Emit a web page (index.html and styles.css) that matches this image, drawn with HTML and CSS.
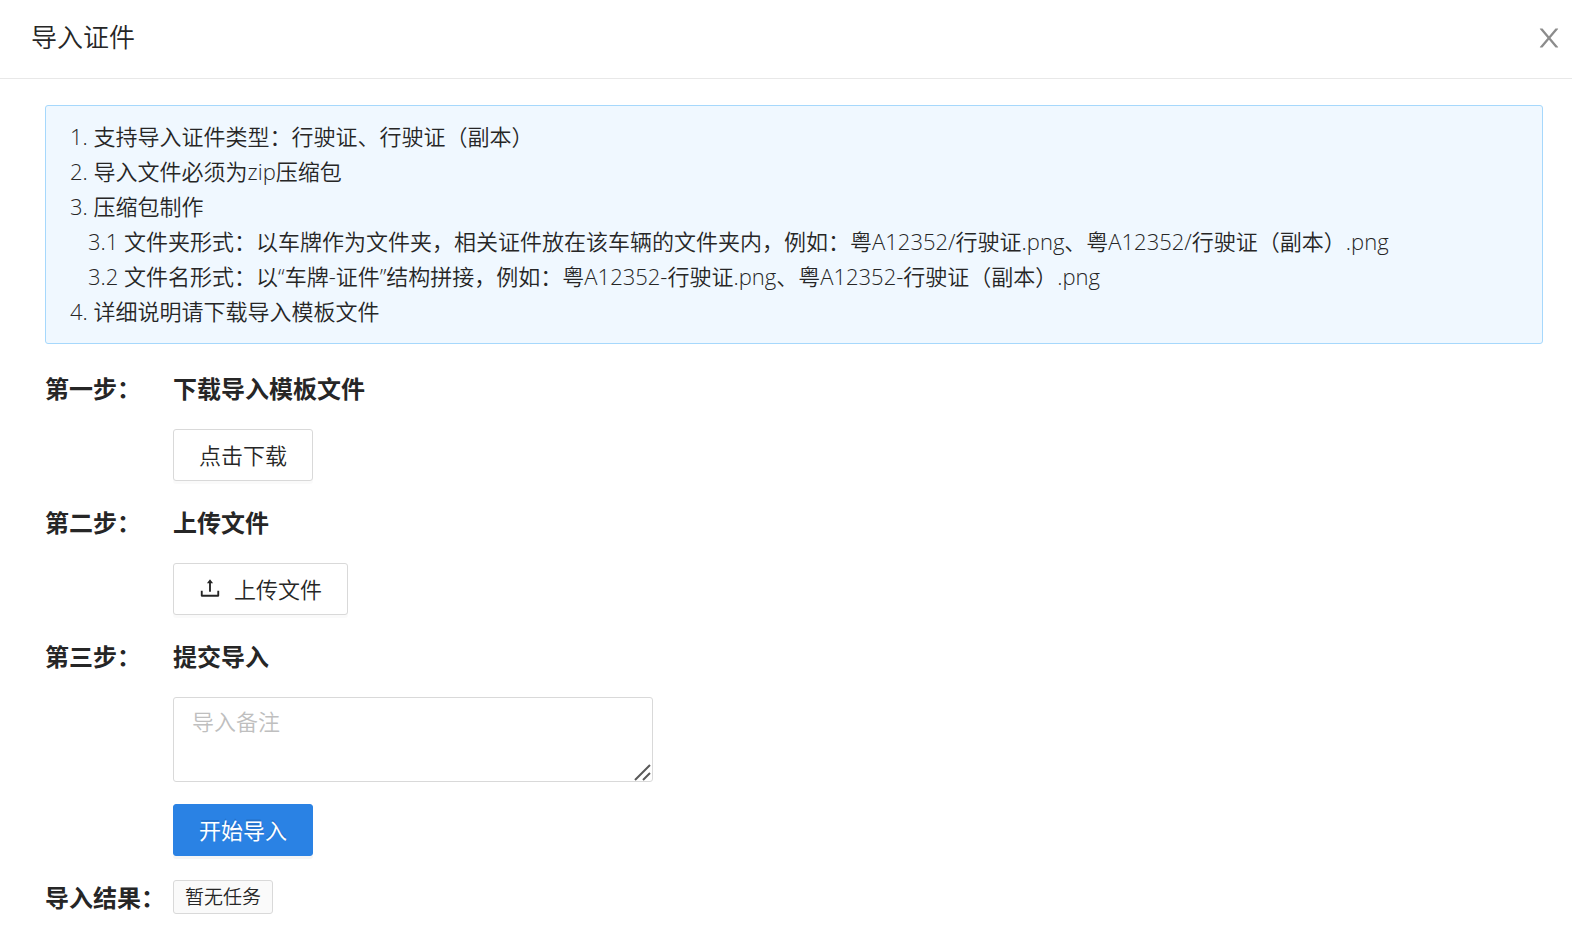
FILE: index.html
```html
<!DOCTYPE html>
<html lang="zh-CN">
<head>
    <meta charset="UTF-8">
    <meta name="viewport" content="width=device-width, initial-scale=1.0">
    <title>导入证件</title>
    <link rel="stylesheet" href="styles.css">
</head>
<body>
    <header class="header">
        <h1 class="title">导入证件</h1>
        <button class="close" type="button" aria-label="关闭">
            <svg viewBox="64 64 896 896" aria-hidden="true"><path d="M563.8 512l262.5-312.9c4.4-5.2.7-13.1-6.1-13.1h-79.8c-4.7 0-9.2 2.1-12.3 5.7L511.6 449.8 295.1 191.7c-3-3.6-7.5-5.7-12.3-5.7H203c-6.8 0-10.5 7.9-6.1 13.1L459.4 512 196.9 824.9A7.95 7.95 0 0 0 203 838h79.8c4.7 0 9.2-2.1 12.3-5.7l216.5-258.1 216.5 258.1c3 3.6 7.5 5.7 12.3 5.7h79.8c6.8 0 10.5-7.9 6.1-13.1L563.8 512z"/></svg>
        </button>
    </header>

    <main class="content">
        <!-- 导入说明 -->
        <div class="notice">
            <p>1. 支持导入证件类型：行驶证、行驶证（副本）</p>
            <p>2. 导入文件必须为zip压缩包</p>
            <p>3. 压缩包制作</p>
            <p class="sub">3.1 文件夹形式：以车牌作为文件夹，相关证件放在该车辆的文件夹内，例如：粤A12352/行驶证.png、粤A12352/行驶证（副本）.png</p>
            <p class="sub">3.2 文件名形式：以“车牌-证件”结构拼接，例如：粤A12352-行驶证.png、粤A12352-行驶证（副本）.png</p>
            <p>4. 详细说明请下载导入模板文件</p>
        </div>

        <form class="steps">
            <section class="step">
                <h2>第一步：</h2>
                <div class="step-body">
                    <h2>下载导入模板文件</h2>
                    <button class="button" type="button">点击下载</button>
                </div>
            </section>

            <section class="step">
                <h2>第二步：</h2>
                <div class="step-body">
                    <h2>上传文件</h2>
                    <button class="button" type="button">
                        <svg viewBox="64 64 896 896" aria-hidden="true"><path d="M400 317.7h73.9V656c0 4.4 3.6 8 8 8h60c4.4 0 8-3.6 8-8V317.7H624c6.7 0 10.4-7.7 6.3-12.9L518.3 163a8 8 0 0 0-12.6 0l-112 141.7c-4.1 5.3-.4 13 6.3 13zM878 626h-60c-4.4 0-8 3.6-8 8v154H214V634c0-4.4-3.6-8-8-8h-60c-4.4 0-8 3.6-8 8v198c0 17.7 14.3 32 32 32h684c17.7 0 32-14.3 32-32V634c0-4.4-3.6-8-8-8z"/></svg>
                        上传文件
                    </button>
                </div>
            </section>

            <section class="step">
                <h2>第三步：</h2>
                <div class="step-body">
                    <h2><label for="remark">提交导入</label></h2>
                    <div class="remark">
                        <textarea id="remark" placeholder="导入备注"></textarea>
                        <svg class="grip" viewBox="0 0 18 18" aria-hidden="true"><path d="M2 17L17 2M10 17L17 10"/></svg>
                    </div>
                    <button class="button primary" type="button">开始导入</button>
                </div>
            </section>

            <section class="step">
                <h2>导入结果：</h2>
                <div class="step-body">
                    <span class="tag">暂无任务</span>
                </div>
            </section>
        </form>
    </main>
</body>
</html>
```
FILE: styles.css
```css
* {
    box-sizing: border-box;
}
body {
    margin: 0;
    background-color: #ffffff;
    color: #262626;
    font-family: "Open Sans", "Noto Sans CJK SC", sans-serif;
    font-weight: 350;
    font-size: 22px;
}
h1, h2, p {
    margin: 0;
}
button, textarea {
    font: inherit;
    color: inherit;
}
.header {
    display: flex;
    align-items: center;
    justify-content: space-between;
    padding: 18px 10px 20px 31px;
    border-bottom: 1px solid #e8e8e8;
}
.title {
    padding-bottom: 2px;
    font-size: 26px;
    font-weight: 350;
    line-height: 38px;
}
.close {
    display: flex;
    padding: 0;
    border: none;
    background: none;
    color: #8c8c8c;
    cursor: pointer;
}
.close svg {
    width: 26px;
    height: 26px;
    fill: currentColor;
}
.content {
    padding: 26px 29px 29px 45px;
}
.notice {
    padding: 13px 24px 14px;
    border: 1px solid #a6d8fc;
    border-radius: 3px;
    background-color: #f0f8ff;
    line-height: 35px;
}
.notice .sub {
    padding-left: 18px;
}
.steps {
    display: flex;
    flex-direction: column;
    gap: 24px;
    margin-top: 27px;
}
.step {
    display: grid;
    grid-template-columns: 128px 1fr;
}
.step h2 {
    font-size: 24px;
    font-weight: 700;
    line-height: 36px;
    white-space: nowrap;
}
.step-body {
    display: flex;
    flex-direction: column;
    align-items: flex-start;
    gap: 22px;
}
.button {
    display: inline-flex;
    align-items: center;
    gap: 13px;
    height: 52px;
    padding: 0 25px 2px;
    border: 1px solid #d9d9d9;
    border-radius: 3px;
    background-color: #ffffff;
    box-shadow: 0 3px 0 rgba(0, 0, 0, 0.02);
    cursor: pointer;
}
.button svg {
    width: 22px;
    height: 22px;
    fill: currentColor;
}
.button:hover {
    border-color: #2a82e4;
}
.primary {
    border-color: #2a82e4;
    background-color: #2a82e4;
    color: #ffffff;
    font-weight: 400;
    text-shadow: 0 -2px 0 rgba(0, 0, 0, 0.12);
    box-shadow: 0 3px 0 rgba(0, 0, 0, 0.04);
}
.remark {
    position: relative;
    width: 480px;
    max-width: 100%;
}
.remark textarea {
    display: block;
    width: 100%;
    height: 85px;
    padding: 6px 18px;
    border: 1px solid #d9d9d9;
    border-radius: 3px;
    background-color: #ffffff;
    line-height: 35px;
    resize: vertical;
}
.remark textarea::placeholder {
    color: #bfbfbf;
}
.remark textarea::-webkit-resizer {
    display: none;
}
.grip {
    position: absolute;
    right: 2px;
    bottom: 1px;
    width: 18px;
    height: 18px;
    fill: none;
    stroke: #595959;
    stroke-width: 2;
    pointer-events: none;
}
.tag {
    padding: 0 11px;
    border: 1px solid #d9d9d9;
    border-radius: 3px;
    background-color: #fafafa;
    font-size: 19px;
    line-height: 32px;
}
```
